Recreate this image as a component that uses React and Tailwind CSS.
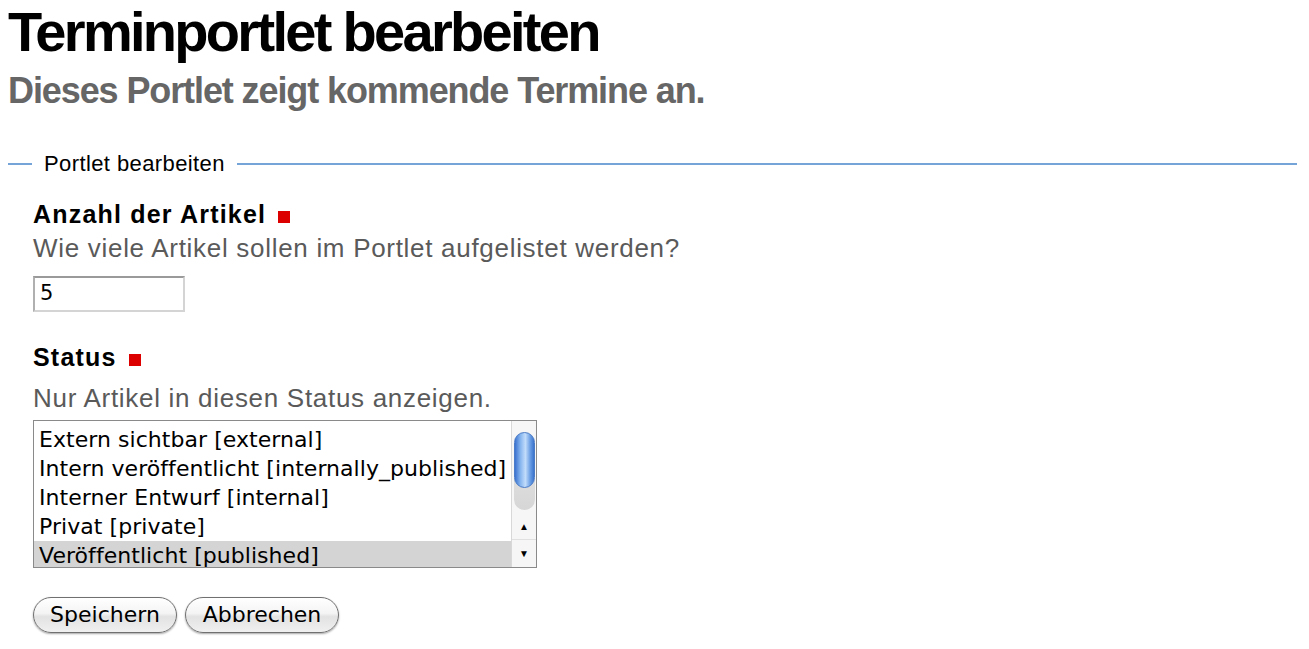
import React from "react";

const Req = () => <span className="inline-block w-[12px] h-[12px] bg-[#dd0000] ml-[12px]" />;

export default function App() {
  const opts = [
    "Extern sichtbar [external]",
    "Intern veröffentlicht [internally_published]",
    "Interner Entwurf [internal]",
    "Privat [private]",
    "Veröffentlicht [published]",
  ];
  const btn =
    "h-[36px] rounded-full border border-[#707070] bg-[linear-gradient(180deg,#ffffff,#f4f4f4_45%,#e2e2e2_55%,#f0f0f0)] shadow-[0_1px_2px_rgba(0,0,0,0.35)] text-[22px] leading-[34px] font-['DejaVu_Sans',sans-serif] text-black";
  return (
    <div className="w-[1309px] h-[649px] bg-white overflow-hidden font-['Liberation_Sans',Arial,sans-serif]">
      <div className="px-[8px]">
        <h1 className="text-[56px] leading-[64px] font-bold text-black tracking-[-2.7px]">Terminportlet bearbeiten</h1>
        <p className="mt-[7px] text-[36px] leading-[40px] font-bold text-[#666666] tracking-[-1.1px]">Dieses Portlet zeigt kommende Termine an.</p>
        <div className="mt-[40px] w-[1289px]">
          <div className="flex items-center h-[26px]">
            <div className="w-[24px] h-[2px] bg-[#74a4d8]" />
            <span className="px-[12px] text-[22px] leading-[26px] text-black tracking-[0.4px]">Portlet bearbeiten</span>
            <div className="flex-1 h-[2px] bg-[#74a4d8]" />
          </div>
          <div className="pl-[25px] pt-[22px]">
            <div className="text-[25px] font-bold text-black leading-[30px] tracking-[1.2px]">Anzahl der Artikel<Req /></div>
            <div className="mt-[4px] text-[26px] text-[#5a5a5a] leading-[30px] tracking-[0.7px]">Wie viele Artikel sollen im Portlet aufgelistet werden?</div>
            <div className="mt-[13px] w-[152px] h-[36px] border-[2px] border-t-[#9a9a9a] border-l-[#b0b0b0] border-r-[#d4d4d4] border-b-[#d4d4d4] flex items-center pl-[5px] text-[21px] font-['DejaVu_Sans',sans-serif] text-black">5</div>
            <div className="mt-[30px] text-[25px] font-bold text-black leading-[30px] tracking-[1.2px]">Status<Req /></div>
            <div className="mt-[11px] text-[26px] text-[#5a5a5a] leading-[30px] tracking-[0.7px]">Nur Artikel in diesen Status anzeigen.</div>
            <div className="mt-[7px] w-[504px] h-[148px] border border-[#8a8a8a] flex overflow-hidden">
              <div className="flex-1 pt-[4px]">
                {opts.map((o, i) => (
                  <div key={o} className={`h-[29px] leading-[29px] pl-[5px] text-[22px] text-black font-['DejaVu_Sans',sans-serif] tracking-[0.05px] whitespace-nowrap ${i === 4 ? "bg-[#d4d4d4]" : ""}`}>{o}</div>
                ))}
              </div>
              <div className="w-[25px] border-l border-[#d8d8d8] bg-[#f6f6f6] flex flex-col items-center">
                <div className="mt-[11px] w-[21px] h-[78px] rounded-full bg-[linear-gradient(180deg,#e8e8e8,#d6d6d6)] relative">
                  <div className="absolute inset-x-0 top-0 h-[56px] rounded-full bg-[linear-gradient(90deg,#3a72d0,#8ab8f0_30%,#c2dcfb_55%,#6a9ee4_80%,#3c74cc)] border border-[#4a7cc8]" />
                </div>
                <div className="flex-1" />
                <div className="h-[26px] w-full flex items-center justify-center text-[10px] text-black">▲</div>
                <div className="h-[28px] w-full flex items-center justify-center text-[10px] text-black border-t border-[#e0e0e0]">▼</div>
              </div>
            </div>
            <div className="mt-[29px] flex gap-[8px]">
              <button className={`${btn} w-[144px]`}>Speichern</button>
              <button className={`${btn} w-[154px]`}>Abbrechen</button>
            </div>
          </div>
        </div>
      </div>
    </div>
  );
}
